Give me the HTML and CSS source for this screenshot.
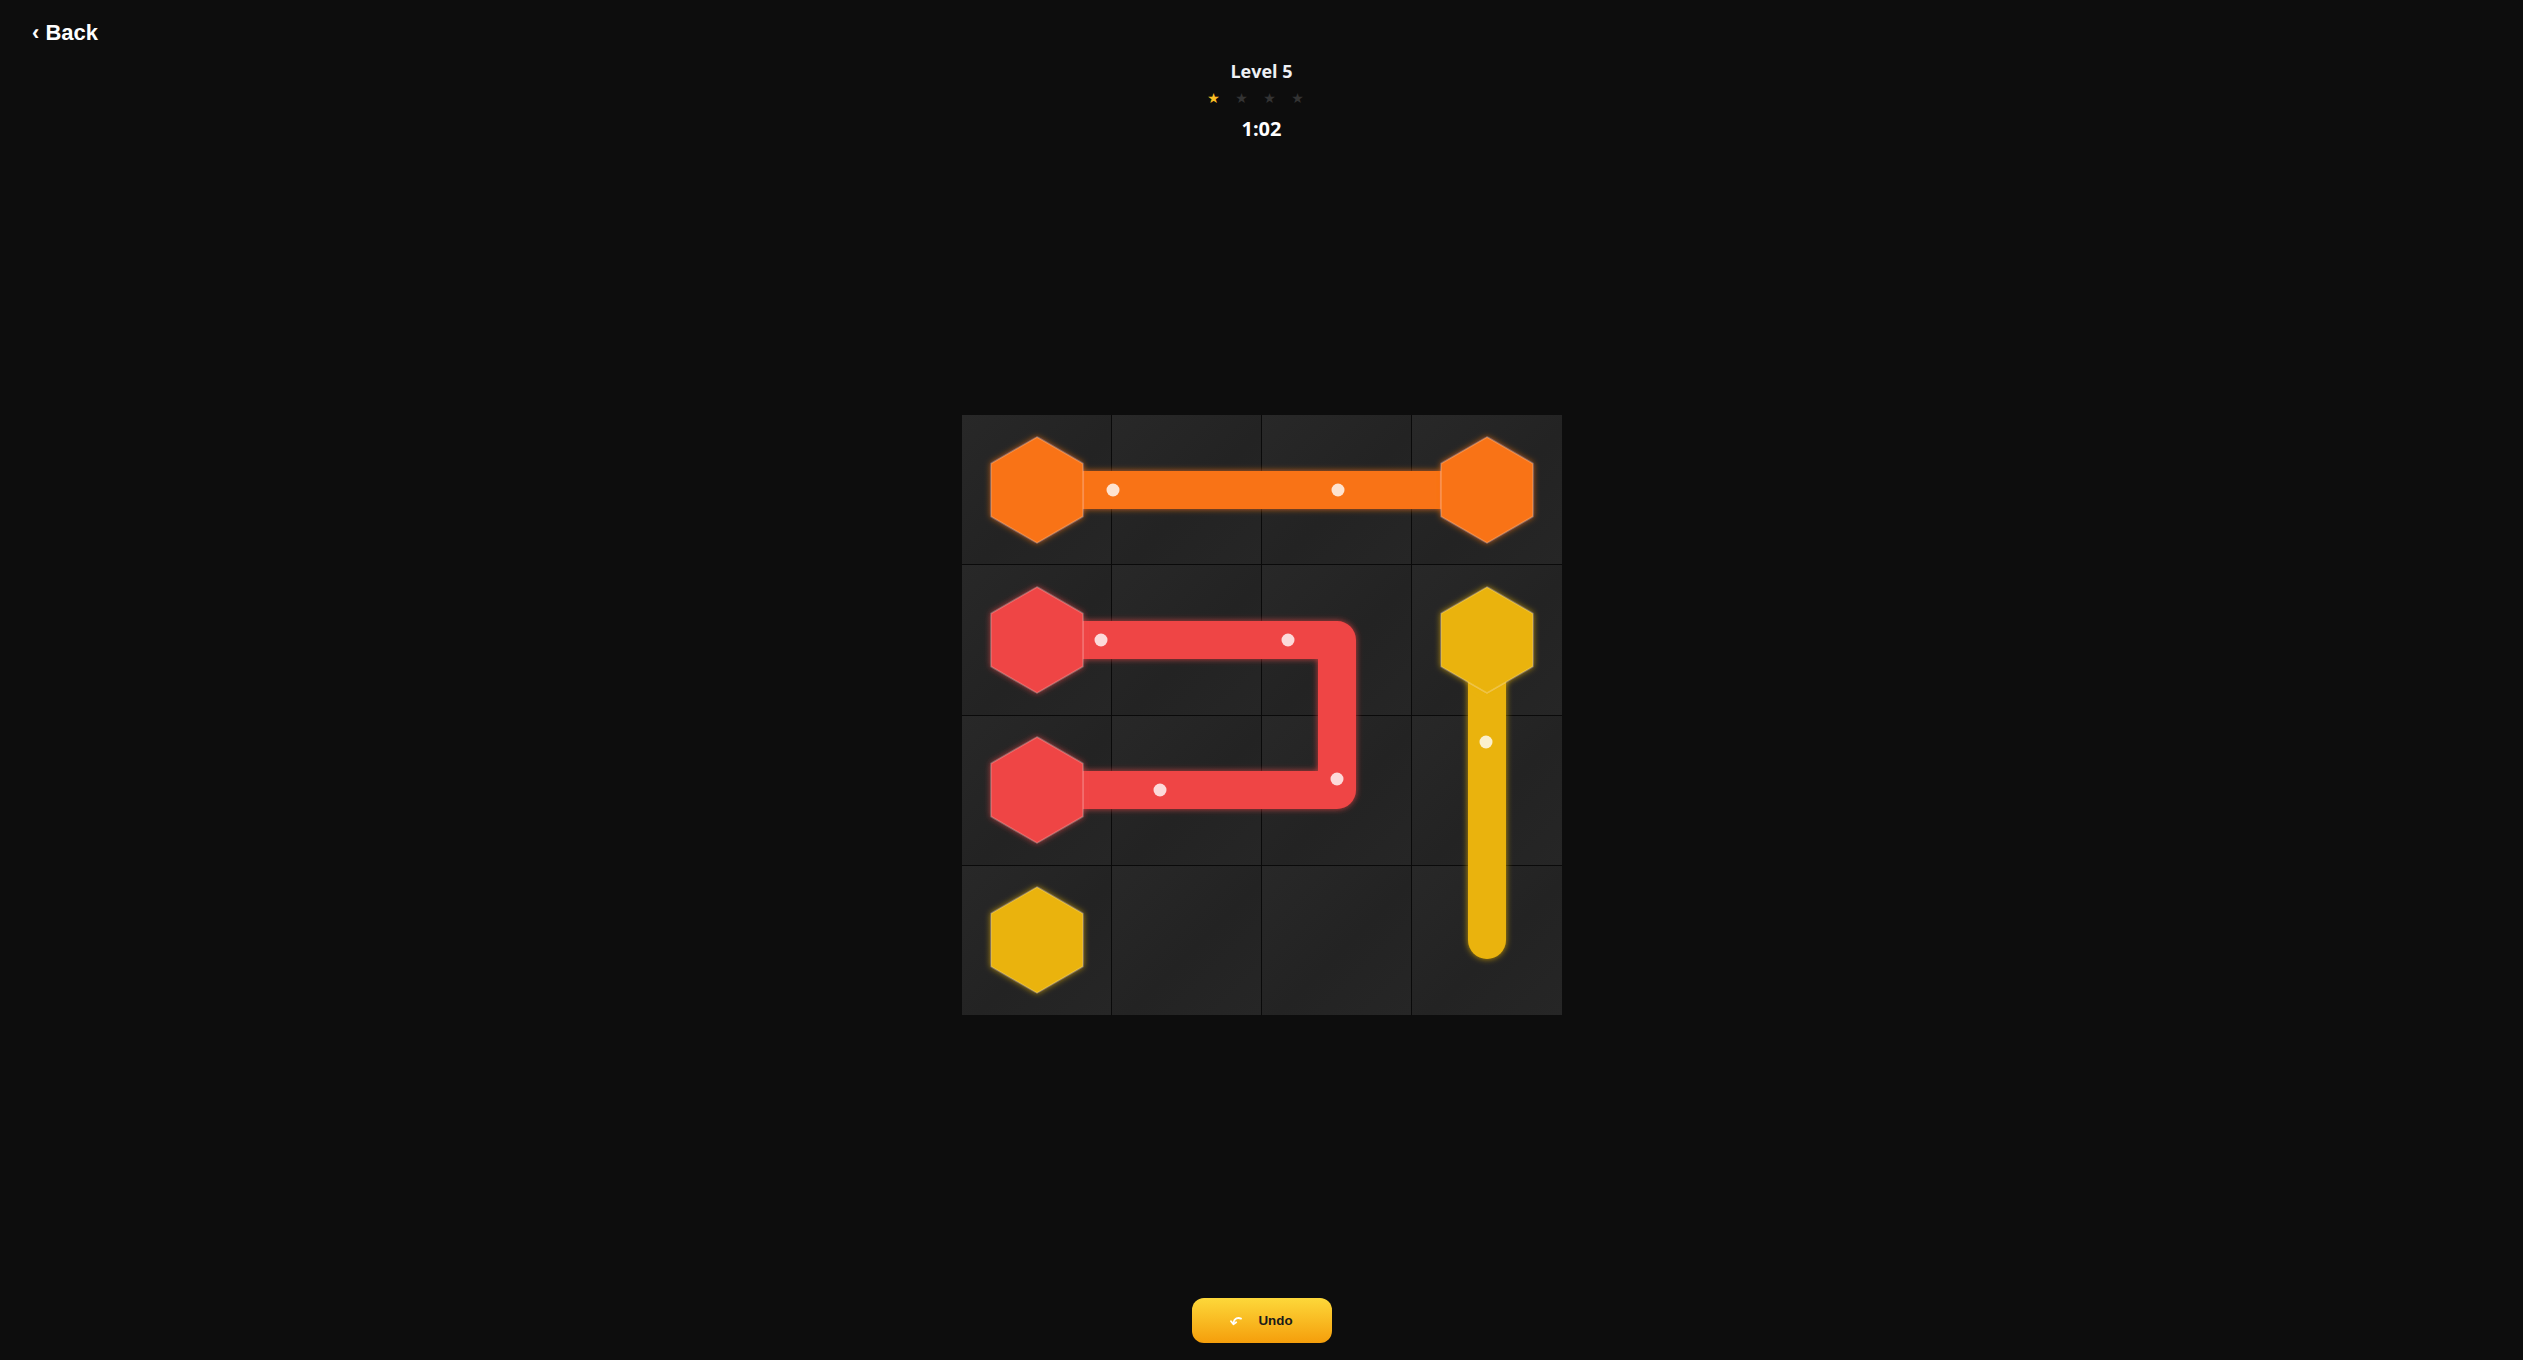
FILE: index.html
```html
<!DOCTYPE html>
<html lang="en">
<head>
<meta charset="utf-8">
<title>Level 5</title>
<link rel="stylesheet" href="styles.css">
</head>
<body>
<div class="app">
  <header class="topbar">
    <button class="back">‹ Back</button>
    <div class="hud">
      <div class="level">Level 5</div>
      <div class="stars">
        <span class="star on">★</span>
        <span class="star">★</span>
        <span class="star">★</span>
        <span class="star">★</span>
      </div>
      <div class="timer">1:02</div>
    </div>
    <div class="spacer"></div>
  </header>

  <main class="stage">
    <div class="board">
      <div class="cell"></div><div class="cell"></div><div class="cell"></div><div class="cell"></div>
      <div class="cell"></div><div class="cell"></div><div class="cell"></div><div class="cell"></div>
      <div class="cell"></div><div class="cell"></div><div class="cell"></div><div class="cell"></div>
      <div class="cell"></div><div class="cell"></div><div class="cell"></div><div class="cell"></div>
      <svg class="paths" viewBox="0 0 600 600" xmlns="http://www.w3.org/2000/svg">
        <defs>
          <filter id="glow-o" filterUnits="userSpaceOnUse" x="-50" y="-50" width="700" height="700">
            <feDropShadow dx="0" dy="0" stdDeviation="3" flood-color="#f97316" flood-opacity="0.8"/>
          </filter>
          <filter id="glow-r" filterUnits="userSpaceOnUse" x="-50" y="-50" width="700" height="700">
            <feDropShadow dx="0" dy="0" stdDeviation="3" flood-color="#ef4444" flood-opacity="0.8"/>
          </filter>
          <filter id="glow-y" filterUnits="userSpaceOnUse" x="-50" y="-50" width="700" height="700">
            <feDropShadow dx="0" dy="0" stdDeviation="3" flood-color="#eab308" flood-opacity="0.8"/>
          </filter>
        </defs>

        <path class="pipe orange" filter="url(#glow-o)" d="M75 75H525"/>
        <path class="pipe red" filter="url(#glow-r)" d="M75 225H375V375H75"/>
        <path class="pipe yellow" filter="url(#glow-y)" d="M525 225V525"/>

        <g class="dots">
          <circle class="dot" cx="151" cy="75" r="6.5"/>
          <circle class="dot" cx="376" cy="75" r="6.5"/>
          <circle class="dot" cx="139" cy="225" r="6.5"/>
          <circle class="dot" cx="326" cy="225" r="6.5"/>
          <circle class="dot" cx="375" cy="364" r="6.5"/>
          <circle class="dot" cx="198" cy="375" r="6.5"/>
          <circle class="dot" cx="524" cy="327" r="6.5"/>
        </g>

        <g class="node orange" filter="url(#glow-o)">
          <polygon points="75,22 120.9,48.5 120.9,101.5 75,128 29.1,101.5 29.1,48.5"/>
          <polygon points="525,22 570.9,48.5 570.9,101.5 525,128 479.1,101.5 479.1,48.5"/>
        </g>
        <g class="node red" filter="url(#glow-r)">
          <polygon points="75,172 120.9,198.5 120.9,251.5 75,278 29.1,251.5 29.1,198.5"/>
          <polygon points="75,322 120.9,348.5 120.9,401.5 75,428 29.1,401.5 29.1,348.5"/>
        </g>
        <g class="node yellow" filter="url(#glow-y)">
          <polygon points="525,172 570.9,198.5 570.9,251.5 525,278 479.1,251.5 479.1,198.5"/>
          <polygon points="75,472 120.9,498.5 120.9,551.5 75,578 29.1,551.5 29.1,498.5"/>
        </g>
      </svg>
    </div>
  </main>

  <footer class="controls">
    <button class="undo">
      <svg class="undo-icon" viewBox="0 0 12 10" width="12" height="10" xmlns="http://www.w3.org/2000/svg">
        <path d="M11 2.6C7.8 1.2 4.6 2.2 3.4 6.4" fill="none" stroke="#fff" stroke-width="1.8" stroke-linecap="round"/>
        <path d="M1 5.2l2.4 3L6.2 6.2" fill="none" stroke="#fff" stroke-width="1.8" stroke-linecap="round" stroke-linejoin="round"/>
      </svg>
      <span>Undo</span>
    </button>
  </footer>
</div>
</body>
</html>
```

FILE: styles.css
```css
html, body {
  margin: 0;
  height: 100%;
  background: #0d0d0d;
}

.app {
  height: 100vh;
  display: flex;
  flex-direction: column;
  font-family: "Open Sans", "Noto Sans", sans-serif;
}

.topbar {
  display: grid;
  grid-template-columns: 1fr auto 1fr;
  align-items: start;
  padding: 20px 32px 0;
}

.back {
  justify-self: start;
  background: none;
  border: 0;
  padding: 0;
  color: #ffffff;
  font: 700 22px/26px "Liberation Sans", Arial, sans-serif;
  cursor: pointer;
}

.hud {
  margin-top: 40px;
  display: flex;
  flex-direction: column;
  align-items: center;
}

.level {
  font-size: 18px;
  font-weight: 700;
  line-height: 22px;
  color: #eef0f4;
}

.stars {
  display: flex;
  gap: 14px;
  margin-top: 6px;
  padding-right: 12px;
  height: 20px;
  align-items: center;
}

.star {
  width: 14px;
  text-align: center;
  font-family: "DejaVu Sans", sans-serif;
  font-size: 14px;
  line-height: 20px;
  color: #333333;
}

.star.on {
  color: #fbbf24;
}

.timer {
  margin-top: 9px;
  font-size: 20px;
  font-weight: 700;
  line-height: 24px;
  color: #ffffff;
}

.stage {
  flex: 1;
  display: flex;
  align-items: center;
  justify-content: center;
  padding-bottom: 1px;
}

.board {
  position: relative;
  width: 600px;
  height: 600px;
  display: grid;
  grid-template-columns: repeat(4, 1fr);
  grid-template-rows: repeat(4, 1fr);
  gap: 1px;
  background: #0a0a0a;
}

.cell {
  background: linear-gradient(135deg, #282828 0%, #232323 55%, #262626 100%);
}

.paths {
  position: absolute;
  inset: 0;
  width: 100%;
  height: 100%;
  overflow: visible;
  pointer-events: none;
}

.pipe {
  fill: none;
  stroke-width: 38;
  stroke-linecap: round;
  stroke-linejoin: round;
}

.pipe.orange { stroke: #f97316; }
.pipe.red { stroke: #ef4444; }
.pipe.yellow { stroke: #eab308; }

.dot {
  fill: rgba(255, 255, 255, 0.8);
}

.node {
  stroke: rgba(255, 255, 255, 0.22);
  stroke-width: 1.5;
}

.node.orange { fill: #f97316; }
.node.red { fill: #ef4444; }
.node.yellow { fill: #eab308; }

.controls {
  display: flex;
  justify-content: center;
  padding: 8px 0 17px;
}

.undo {
  width: 140px;
  height: 45px;
  border: 0;
  border-radius: 12px;
  background: linear-gradient(180deg, #fdd83a 0%, #f59e0b 100%);
  display: flex;
  align-items: center;
  justify-content: center;
  gap: 16px;
  padding: 0;
  color: #1a1a1a;
  font: 700 13.33px "Liberation Sans", Arial, sans-serif;
  cursor: pointer;
}

.undo-icon {
  display: block;
}
```
